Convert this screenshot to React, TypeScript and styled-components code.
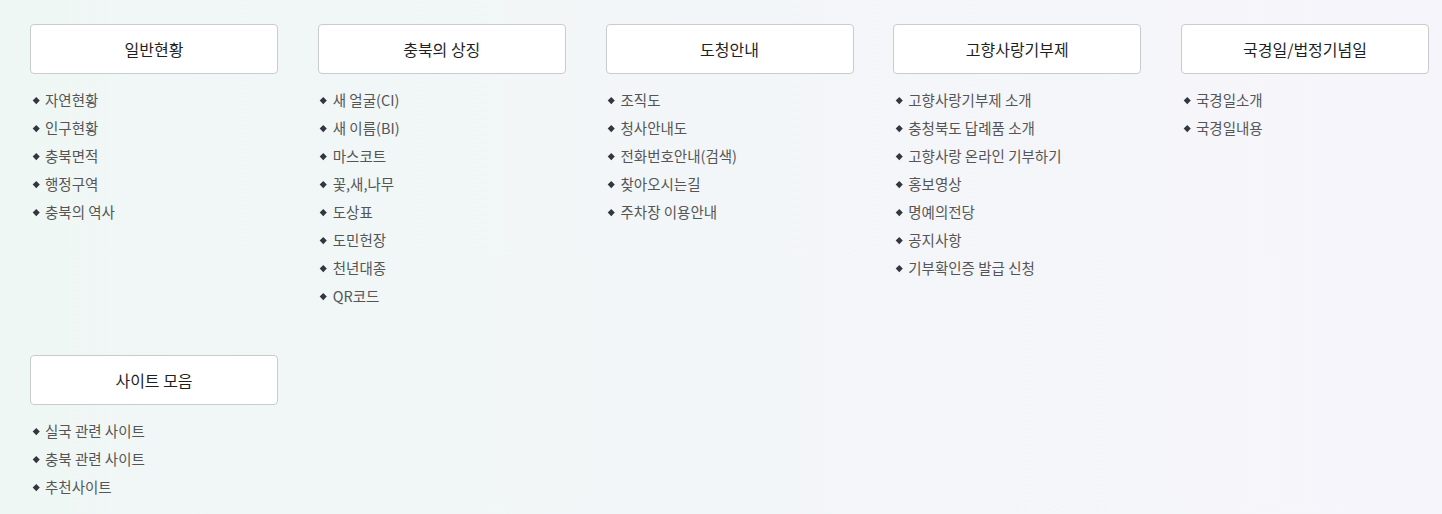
import React from "react";
import styled, { createGlobalStyle } from "styled-components";

const Global = createGlobalStyle`
  html, body { margin: 0; padding: 0; }
  body {
    font-family: "Noto Sans CJK KR", "Noto Sans", sans-serif;
    background: #f3f6f7;
  }
`;

const Page = styled.div`
  width: 1442px;
  height: 514px;
  box-sizing: border-box;
  padding: 24px 0 0 30px;
  background: linear-gradient(90deg, #eff7f5 0%, #f3f6f8 50%, #f6f5fb 100%);
  overflow: hidden;
`;

const Grid = styled.div`
  display: grid;
  grid-template-columns: repeat(5, 248px);
  column-gap: 39.75px;
  row-gap: 45px;
`;

const Section = styled.section`
  display: flex;
  flex-direction: column;
`;

const TitleBox = styled.div`
  height: 50px;
  box-sizing: border-box;
  border: 1px solid #c9cbce;
  border-radius: 4px;
  background: #ffffff;
  display: flex;
  align-items: center;
  justify-content: center;
  font-size: 16px;
  font-weight: 400;
  color: #1f1f1f;
`;

const List = styled.ul`
  list-style: none;
  margin: 12px 0 0;
  padding: 0;
`;

const Item = styled.li`
  position: relative;
  height: 28px;
  line-height: 28px;
  padding-left: 15px;
  font-size: 14.5px;
  color: #555;
  &::before {
    content: "";
    position: absolute;
    left: 3.5px;
    top: 12px;
    width: 4.5px;
    height: 4.5px;
    background: #33363f;
    transform: rotate(45deg);
  }
`;

const data: { title: string; items: string[] }[] = [
  { title: "일반현황", items: ["자연현황", "인구현황", "충북면적", "행정구역", "충북의 역사"] },
  {
    title: "충북의 상징",
    items: ["새 얼굴(CI)", "새 이름(BI)", "마스코트", "꽃,새,나무", "도상표", "도민헌장", "천년대종", "QR코드"],
  },
  { title: "도청안내", items: ["조직도", "청사안내도", "전화번호안내(검색)", "찾아오시는길", "주차장 이용안내"] },
  {
    title: "고향사랑기부제",
    items: [
      "고향사랑기부제 소개",
      "충청북도 답례품 소개",
      "고향사랑 온라인 기부하기",
      "홍보영상",
      "명예의전당",
      "공지사항",
      "기부확인증 발급 신청",
    ],
  },
  { title: "국경일/법정기념일", items: ["국경일소개", "국경일내용"] },
  { title: "사이트 모음", items: ["실국 관련 사이트", "충북 관련 사이트", "추천사이트"] },
];

export default function App() {
  return (
    <Page>
      <Global />
      <Grid>
        {data.map((s) => (
          <Section key={s.title}>
            <TitleBox>{s.title}</TitleBox>
            <List>
              {s.items.map((it) => (
                <Item key={it}>{it}</Item>
              ))}
            </List>
          </Section>
        ))}
      </Grid>
    </Page>
  );
}
